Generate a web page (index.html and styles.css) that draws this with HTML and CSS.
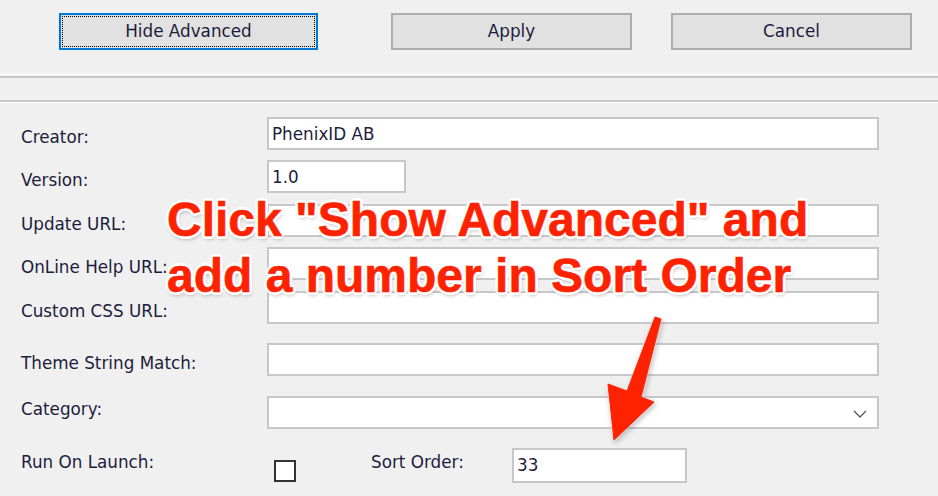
FILE: index.html
```html
<!DOCTYPE html>
<html>
<head>
    <title>Theme Settings</title>
    <meta name="viewport" content="width=device-width, initial-scale=1">
    <link rel="stylesheet" href="styles.css">
</head>
<body>
    <div class="window">
        <div class="button-bar">
            <button class="btn btn-focus"><span>Hide Advanced</span></button>
            <button class="btn">Apply</button>
            <button class="btn">Cancel</button>
        </div>
        <div class="sep sep-top"></div>
        <div class="sep sep-bottom"></div>

        <div class="form">
            <div class="row r-creator">
                <label>Creator:</label>
                <div class="field wide">PhenixID AB</div>
            </div>
            <div class="row r-version">
                <label>Version:</label>
                <div class="field short">1.0</div>
            </div>
            <div class="row r-update">
                <label>Update URL:</label>
                <div class="field wide"></div>
            </div>
            <div class="row r-help">
                <label>OnLine Help URL:</label>
                <div class="field wide"></div>
            </div>
            <div class="row r-css">
                <label>Custom CSS URL:</label>
                <div class="field wide"></div>
            </div>
            <div class="row r-theme">
                <label>Theme String Match:</label>
                <div class="field wide"></div>
            </div>
            <div class="row r-category">
                <label>Category:</label>
                <div class="field wide select">
                    <svg class="chevron" width="14" height="8" viewBox="0 0 14 8"><path d="M1 1 L7 7 L13 1" fill="none" stroke="#555" stroke-width="1.3"/></svg>
                </div>
            </div>
            <div class="row r-launch">
                <label>Run On Launch:</label>
                <div class="checkbox"></div>
                <span class="sort-label">Sort Order:</span>
                <div class="field sort">33</div>
            </div>
        </div>

        <div class="callout">Click "Show Advanced" and<br>add a number in Sort Order</div>
        <svg class="arrow" width="938" height="496" viewBox="0 0 938 496">
            <polygon points="655,317 661,319 641,397 654,402 614,440 608,384 627,391" fill="#ff2200" stroke="#ff2200" stroke-width="1" stroke-linejoin="round"/>
        </svg>
    </div>
</body>
</html>
```

FILE: styles.css
```css
body {
    margin: 0;
    background-color: #f0f0f0;
    font-family: 'DejaVu Sans', Verdana, sans-serif;
    font-size: 16.8px;
    color: #1c1c3c;
}
.window {
    position: relative;
    width: 938px;
    height: 496px;
    overflow: hidden;
}
.button-bar {
    display: flex;
    padding: 13px 0 0 59px;
}
.btn {
    height: 37px;
    background-color: #e1e1e1;
    border: 2px solid #adadad;
    font-family: inherit;
    font-size: 16.8px;
    color: #1c1c3c;
    padding: 0 0 2px 0;
}
.btn:nth-child(1) { width: 259px; margin-right: 73px; }
.btn:nth-child(2) { width: 241px; margin-right: 39px; }
.btn:nth-child(3) { width: 241px; }
.btn-focus {
    border: 2px solid #0078d7;
    padding: 1px;
}
.btn-focus span {
    display: flex;
    align-items: center;
    justify-content: center;
    height: 100%;
    padding-bottom: 2px;
    border: 1px dotted #000;
    box-sizing: border-box;
}
.sep-top {
    margin-top: 24px;
    border-top: 1px solid #ffffff;
    border-bottom: 2px solid #c8c8c8;
    height: 1px;
}
.sep-bottom {
    margin-top: 22px;
    border-top: 2px solid #c8c8c8;
    border-bottom: 1px solid #ffffff;
    height: 0;
}
.form {
    padding: 14px 0 0 21px;
}
.row {
    display: flex;
    align-items: center;
    height: 33px;
}
.row label {
    width: 246px;
    flex: none;
    position: relative;
    top: 3px;
}
.r-version { margin-top: 10px; }
.r-update { margin-top: 11px; }
.r-help { margin-top: 10px; }
.r-css { margin-top: 11px; }
.r-theme { margin-top: 19px; }
.r-category { margin-top: 20px; }
.r-category label { top: -4px; }
.r-launch { margin-top: 19px; height: 34px; }
.r-launch label { top: -3px; width: 253px; }
.field {
    box-sizing: border-box;
    height: 33px;
    background-color: #ffffff;
    border: 2px solid #c7c7c9;
    padding: 0 0 0 3px;
    display: flex;
    align-items: center;
    color: #1c1c3c;
}
.wide { width: 612px; }
.short { width: 139px; }
.select {
    justify-content: flex-end;
    padding-right: 10px;
}
.chevron { margin-top: 3px; }
.checkbox {
    width: 22px;
    height: 22px;
    box-sizing: border-box;
    border: 2px solid #333;
    background: #fff;
    margin-top: 12px;
    flex: none;
}
.sort-label {
    margin-left: 75px;
    width: 141px;
    position: relative;
    top: -3px;
}
.sort {
    width: 175px;
    height: 35px;
}
.callout {
    position: absolute;
    left: 167px;
    top: 192px;
    font-family: 'Liberation Sans', Arial, sans-serif;
    font-weight: bold;
    font-size: 48px;
    line-height: 56px;
    color: #ff2200;
    white-space: nowrap;
    -webkit-text-stroke: 0.6px #ff2200;
    text-shadow:
        -2px -2px 0 #fff, 2px -2px 0 #fff, -2px 2px 0 #fff, 2px 2px 0 #fff,
        0 -3px 0 #fff, 0 3px 0 #fff, -3px 0 0 #fff, 3px 0 0 #fff,
        1px 3px 4px rgba(0,0,0,0.35);
}
.arrow {
    position: absolute;
    left: 0;
    top: 0;
    filter: drop-shadow(0 0 2px rgba(255,255,255,0.9)) drop-shadow(1px 2px 2px rgba(0,0,0,0.3));
}
```
